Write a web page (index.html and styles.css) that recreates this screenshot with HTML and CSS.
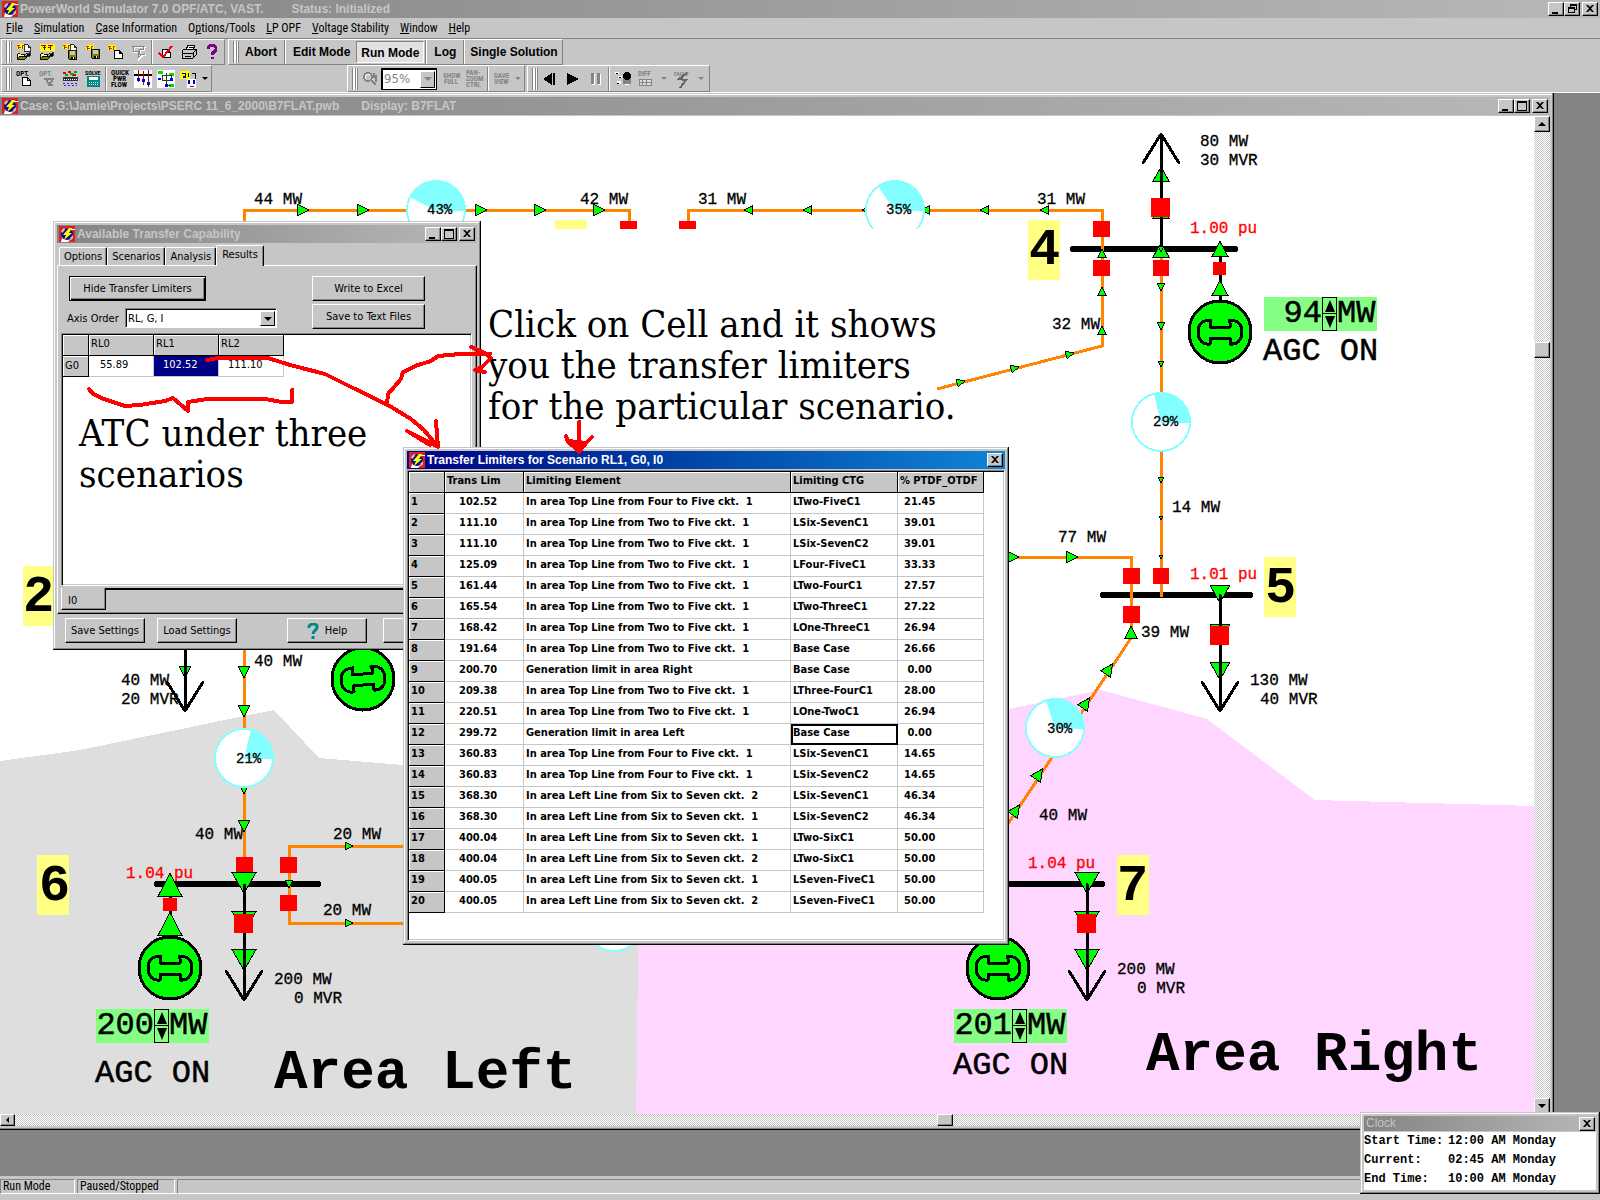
FILE: index.html
```html
<!DOCTYPE html>
<html lang="en">
<head>
<meta charset="utf-8">
<title>PowerWorld Simulator 7.0 OPF/ATC</title>
<link rel="stylesheet" href="styles.css">
</head>
<body>
<svg class="defs" aria-hidden="true">
  <defs>
    <symbol id="logo" viewBox="0 0 16 16">
      <rect width="16" height="16" fill="#fff"/>
      <path d="M0 0h16v3h-3l-3-1H6L3 4v8l-1 4H0zM13 4h3v12H9l4-4z" fill="#e02020"/>
      <circle cx="8" cy="8" r="6" fill="#101080"/>
      <path d="M2 5l3-3 1 2-3 3zM11 12l3-3v3l-2 2z" fill="#c6c6c6"/>
      <path d="M10 2L4 9h3l-2 5 8-7h-3l3-5z" fill="#ff0"/>
    </symbol>
    <symbol id="page" viewBox="0 0 9 9"><path d="M.5.5h5l3 3v5h-8zM5.500.5v3h3" fill="#fff" stroke="#000"/></symbol>
    <symbol id="floppy" viewBox="0 0 10 10"><path d="M.5.5h9v9h-8l-1-1z" fill="#808000" stroke="#000"/><path d="M2 1h6v4H2z" fill="#c6c6c6"/><path d="M3 7h5v3H3z" fill="#000"/><path d="M6 7h1v2H6z" fill="#fff"/></symbol>
    <symbol id="folder" viewBox="0 0 16 8"><path d="M.5 7.500v-5l1-1h2l1 1h4v2" fill="#ff8" stroke="#000"/><path d="M.5 7.500l2-3h8l-2 3z" fill="#808000" stroke="#000"/><path d="M9 2c2-2 3 0 4 1M14 0v4h-4z" fill="#000" stroke="#000" stroke-width=".7"/></symbol>
    <symbol id="case" viewBox="0 0 10 6"><path d="M0 0h9v5H0z" fill="#ff0"/><path d="M0 1h3M5 1h3M1 3h3M5 3h2M2 5v-3M6 5V2" stroke="#b02000"/></symbol>
    <path id="flow" d="M-.5-.5L.5 0L-.5.5Z" vector-effect="non-scaling-stroke"/>
    <g id="machine"><circle r="31" fill="#0f0" stroke="#000" stroke-width="3"/><path d="M-10-5H10V-9L9-12C17-12 22-8 22 0S17 13 10 12V6H-10V12C-17 13-22 8-22 0S-17-12-9-12L-10-9Z" fill="#0f0" stroke="#000" stroke-width="3" stroke-linejoin="round"/></g>
    <g id="load-head"><path d="M0-116V0M-18-29L0 0L18-29" fill="none" stroke="#000" stroke-width="3" stroke-linecap="round" stroke-linejoin="round"/></g>
  </defs>
</svg>
<div class="app">
  <header class="top">
    <div class="titlebar app-title">
      <svg class="logo"><use href="#logo"/></svg>
      <h1 class="caption">PowerWorld Simulator 7.0 OPF/ATC, VAST.</h1>
      <span class="caption status-caption">Status: Initialized</span>
      <div class="win-buttons">
        <button class="wb" aria-label="Minimize"><svg viewBox="0 0 12 10"><path d="M2 8h6v2H2z"/></svg></button>
        <button class="wb" aria-label="Restore"><svg viewBox="0 0 12 10"><path d="M4 0h7v6H9V5h1V2H5v1H4zM2 3h7v6H2zM3 5v3h5V5z" fill-rule="evenodd"/></svg></button>
        <button class="wb close" aria-label="Close"><svg viewBox="0 0 12 10"><path d="M2 1h2l2 2 2-2h2L7 4.500 10 8H8L6 6 4 8H2l3-3.500z"/></svg></button>
      </div>
    </div>
    <nav class="menu">
      <a href="#"><u>F</u>ile</a><a href="#"><u>S</u>imulation</a><a href="#"><u>C</u>ase Information</a><a href="#">O<u>p</u>tions/Tools</a><a href="#"><u>L</u>P OPF</a><a href="#"><u>V</u>oltage Stability</a><a href="#"><u>W</u>indow</a><a href="#"><u>H</u>elp</a>
    </nav>
    <div class="bars">
      <div class="bar-row">
        <div class="bar">
          <i class="grip"></i>
          <button class="tb" aria-label="Open case and display"><svg viewBox="0 0 16 16"><use href="#case" x="1" y="0" width="9" height="6"/><use href="#page" x="8" y="0" width="7" height="8"/><use href="#folder" x="1" y="8" width="15" height="8"/></svg></button>
          <button class="tb" aria-label="Open case"><svg viewBox="0 0 16 16"><path d="M1 0h15v7H1z" fill="#ff0"/><path d="M2 1h5M9 1h5M4 3h3M9 3h3M5 1v5M11 1v5" stroke="#900"/><use href="#folder" x="1" y="8" width="15" height="8"/></svg></button>
          <button class="tb" aria-label="Save case and display"><svg viewBox="0 0 16 16"><use href="#case" x="1" y="0" width="9" height="6"/><use href="#page" x="8" y="0" width="7" height="8"/><use href="#floppy" x="6" y="6" width="9" height="10"/></svg></button>
          <button class="tb" aria-label="Save case"><svg viewBox="0 0 16 16"><use href="#case" x="1" y="1" width="9" height="6"/><use href="#floppy" x="6" y="5" width="9" height="10"/></svg></button>
          <button class="tb" aria-label="New display"><svg viewBox="0 0 16 16"><use href="#case" x="0" y="1" width="9" height="6"/><use href="#page" x="5" y="6" width="10" height="9"/></svg></button>
          <button class="tb" aria-label="Edit display" disabled><svg viewBox="0 0 16 16"><path d="M1 2h13M2 2v5h5M7 7v7l3-3M12 2v3H8v5h6" fill="none" stroke="#fff" stroke-width="2" transform="translate(1 1)"/><path d="M1 2h13M2 2v5h5M7 7v7l3-3M12 2v3H8v5h6" fill="none" stroke="#848484"/></svg></button>
          <i class="sep"></i>
          <button class="tb" aria-label="Validate"><svg viewBox="0 0 16 16"><use href="#page" x="4" y="4" width="9" height="11"/><path d="M1 9l4 4L14 2" fill="none" stroke="#e00" stroke-width="2"/></svg></button>
          <button class="tb" aria-label="Print"><svg viewBox="0 0 16 16"><path d="M5 6l2-5h7l-2 5z" fill="#fff" stroke="#000"/><path d="M1 7l2-2h12v6l-3 3H1z" fill="#c6c6c6" stroke="#000"/><path d="M1 9h11l3-3M12 9v5M4 12h6M8 3h4" fill="none" stroke="#000"/></svg></button>
          <button class="tb" aria-label="Help"><svg viewBox="0 0 16 16"><path d="M4 5C4 0 13 0 12 5c0 3-4 3-4 6M8 13v2" fill="none" stroke="#800080" stroke-width="3"/></svg></button>
        </div>
        <div class="bar modes">
          <i class="grip"></i>
          <button class="mode">Abort</button><i class="sep"></i>
          <button class="mode">Edit Mode</button>
          <button class="mode pressed">Run Mode</button><i class="sep"></i>
          <button class="mode">Log</button><i class="sep"></i>
          <button class="mode">Single Solution</button>
        </div>
      </div>
      <div class="bar-row">
        <div class="bar">
          <i class="grip"></i>
          <button class="tb" aria-label="Options"><svg viewBox="0 0 16 16"><text x="0" y="5" class="t6" >OPT.</text><use href="#page" x="6" y="6" width="9" height="9"/></svg></button>
          <button class="tb" aria-label="Display options" disabled><svg viewBox="0 0 16 16"><text x="0" y="5" class="t6 off">OPT.</text><path d="M5 8h10M7 8l3 6 4-6M10 14h4" fill="none" stroke="#848484" stroke-width="2"/></svg></button>
          <button class="tb" aria-label="Area chart"><svg viewBox="0 0 16 16"><path d="M1 2h3M6 1h3M10 4h4" stroke="#e00" stroke-width="2"/><path d="M3 4h3M8 3h4M12 1h3" stroke="#0a0" stroke-width="2"/><path d="M1 6h15v4H1z" fill="#333"/><path d="M2 8h13" stroke="#fff" stroke-dasharray="1 1"/><path d="M1 12h15M2 14h13" stroke="#22f" stroke-dasharray="2 2"/></svg></button>
          <button class="tb" aria-label="Solve"><svg viewBox="0 0 16 16"><text x="0" y="4" class="t5">SOLVE</text><path d="M2 5h13v11H2z" fill="#088"/><path d="M4 6h9v3H4z" fill="#fff"/><path d="M4 11h10M4 13h10" stroke="#dff" stroke-dasharray="1 1"/></svg></button>
          <i class="sep"></i>
          <button class="tb" aria-label="Quick power flow"><svg viewBox="0 0 18 18"><text x="0" y="5" class="t6">QUICK</text><text x="2" y="11" class="t6">PWR</text><text x="0" y="17" class="t6">FLOW</text></svg></button>
          <button class="tb" aria-label="Bus list"><svg viewBox="0 0 18 18"><path d="M0 0h18v18H0z" fill="#fff"/><path d="M0 5h18" stroke="#000" stroke-width="2"/><path d="M4 0v12M9 1v14M14 0v17" stroke="#a00"/><path d="M3 8h3v3H3zM8 9h3v3H8zM13 12h3v3h-3z" fill="#00f"/></svg></button>
          <button class="tb" aria-label="One-line"><svg viewBox="0 0 18 18"><path d="M0 0h18v18H0z" fill="#fff"/><path d="M1 1h5v3H1zM12 3h5v3h-5zM12 14h5v3h-5z" fill="#0d0"/><path d="M5 5h9v5H5zM9 3v12h5" fill="none" stroke="#333"/><path d="M1 8h3v2H1zM13 8h3v3h-3zM8 14h3v3H8z" fill="#00f"/></svg></button>
          <button class="tb" aria-label="Contingency"><svg viewBox="0 0 18 18"><path d="M0 1h10v8H0z" fill="#ff0"/><path d="M2 3h3v3M8 3v4M12 3h3v6" fill="none" stroke="#000"/><path d="M7 9h9v9H7z" fill="#fff"/><path d="M3 6h3v2H3zM8 10h2v4H8zM13 10h2v4h-2z" fill="#00c"/><path d="M10 16h4" stroke="#a00"/></svg></button>
          <button class="drop" aria-label="More"></button>
        </div>
        <div class="bar zoom-bar">
          <i class="grip"></i>
          <button class="tb" aria-label="Zoom" disabled><svg viewBox="0 0 16 16"><circle cx="6" cy="6" r="4" fill="none" stroke="#fff" transform="translate(1 1)"/><circle cx="6" cy="6" r="4" fill="none" stroke="#848484" stroke-width="2"/><path d="M9 9l5 5M12 2v5M14 4v7" stroke="#848484" stroke-width="2"/></svg></button>
          <span class="combo pct"><select aria-label="Zoom level" disabled><option>95%</option></select><i class="arrow"></i></span>
          <button class="tb" aria-label="Show full" disabled><svg viewBox="0 0 18 18"><text x="0" y="8" class="t6 off">SHOW</text><text x="1" y="14" class="t6 off">FULL</text></svg></button>
          <button class="tb" aria-label="Pan and zoom" disabled><svg viewBox="0 0 18 18"><text x="0" y="5" class="t6 off">PAN-</text><text x="0" y="11" class="t6 off">ZOOM</text><text x="0" y="17" class="t6 off">CTRL</text></svg></button>
          <i class="sep"></i>
          <button class="tb" aria-label="Save view" disabled><svg viewBox="0 0 18 18"><text x="1" y="8" class="t6 off">SAVE</text><text x="1" y="14" class="t6 off">VIEW</text></svg></button>
          <button class="drop" aria-label="Views" disabled></button>
        </div>
        <div class="bar run-bar">
          <i class="grip"></i>
          <button class="tb" aria-label="Step back"><svg viewBox="0 0 16 16"><path d="M1 8l9-6v12zM11 2h2v12h-2z"/></svg></button>
          <button class="tb" aria-label="Play"><svg viewBox="0 0 16 16"><path d="M2 2l12 6-12 6z"/></svg></button>
          <button class="tb" aria-label="Pause" disabled><svg viewBox="0 0 16 16"><path d="M4 3h3v11H4zM10 3h3v11h-3z" fill="#fff"/><path d="M3 2h3v11H3zM9 2h3v11H9z" fill="#848484"/></svg></button>
          <i class="sep"></i>
          <button class="tb" aria-label="Contour"><svg viewBox="0 0 18 18"><path d="M1 2h4v2H1zM4 6h4v2H4zM3 11h4v3H3zM11 13h4v2h-4z" fill="#fff"/><path d="M2 3h2v1H2zM5 7h2v1H5zM3 13h2v1H3z"/><path d="M9 5h8v9H9z" fill="#848484"/><circle cx="13" cy="6" r="4"/></svg></button>
          <button class="tb" aria-label="Difference" disabled><svg viewBox="0 0 18 18"><text x="1" y="6" class="t6 off">DIFF</text><path d="M2 9h12v6H2zM5 9v6M9 9v6M2 12h12" fill="#ddd" stroke="#848484"/></svg></button>
          <button class="drop" aria-label="Difference options" disabled></button>
          <button class="tb" aria-label="Fault" disabled><svg viewBox="0 0 18 18"><text x="0" y="6" class="t5 off">FAULT</text><path d="M13 3L5 9l7 1-6 8" fill="none" stroke="#666" stroke-width="2"/></svg></button>
          <button class="drop" aria-label="Fault options" disabled></button>
        </div>
      </div>
    </div>
  </header>

  <main class="workspace">
    <section class="child" aria-label="Case display">
      <div class="titlebar">
        <svg class="logo"><use href="#logo"/></svg>
        <h2 class="caption">Case: G:\Jamie\Projects\PSERC 11_6_2000\B7FLAT.pwb</h2>
        <span class="caption display-caption">Display: B7FLAT</span>
        <div class="win-buttons">
          <button class="wb" aria-label="Minimize"><svg viewBox="0 0 12 10"><path d="M2 8h6v2H2z"/></svg></button>
          <button class="wb" aria-label="Maximize"><svg viewBox="0 0 12 10"><path d="M1 0h10v10H1zM2 2v7h8V2z" fill-rule="evenodd"/></svg></button>
          <button class="wb close" aria-label="Close"><svg viewBox="0 0 12 10"><path d="M2 1h2l2 2 2-2h2L7 4.500 10 8H8L6 6 4 8H2l3-3.500z"/></svg></button>
        </div>
      </div>
      <div class="child-body">
        <div class="canvas">
          <svg class="oneline">
            <g transform="translate(0 -116)">
              <path d="M0 761L80 750L244 716L274 710L319 758L403 765L640 780V1120H0Z" fill="#dedede"/>
              <path d="M640 800L1009 709L1101 690L1207 719L1315 800L1534 806V1120H636Z" fill="#ffd6ff"/>
              <g fill="#ffff84"><rect x="1028" y="220" width="32" height="60"/><rect x="1264" y="557" width="32" height="60"/><rect x="1117" y="855" width="32" height="60"/><rect x="37" y="855" width="32" height="60"/><rect x="23" y="566" width="32" height="60"/><rect x="555" y="220" width="32" height="9"/></g>
              <g fill="none" stroke="#000" stroke-width="6" stroke-linecap="round"><path d="M1073 249H1235M1103 595H1250M1000 884H1102M157 884H318"/></g>
              <g fill="none" stroke="#ff8400" stroke-width="3">
                <path d="M244 230V210H629V224M688 224V210H1102V346L937 389M1161 249V597M1000 557H1131V638L1000 836M244 640V872M410 846H289V923H410"/>
              </g>
              <g fill="none" stroke="#000" stroke-width="3"><path d="M1220 249V300M170 884V940"/></g>
              <g fill="#0f0" stroke="#000">
                <use href="#flow" transform="translate(303 210) scale(12)"/><use href="#flow" transform="translate(363 210) scale(12)"/><use href="#flow" transform="translate(481 210) scale(12)"/><use href="#flow" transform="translate(540 210) scale(12)"/><use href="#flow" transform="translate(599 210) scale(12)"/>
                <use href="#flow" transform="translate(748 210) rotate(180) scale(8)"/><use href="#flow" transform="translate(807 210) rotate(180) scale(8)"/><use href="#flow" transform="translate(866 210) rotate(180) scale(8)"/><use href="#flow" transform="translate(925 210) rotate(180) scale(8)"/><use href="#flow" transform="translate(984 210) rotate(180) scale(8)"/><use href="#flow" transform="translate(1044 210) rotate(180) scale(8)"/>
                <use href="#flow" transform="translate(1102 253) rotate(-90) scale(8)"/><use href="#flow" transform="translate(1102 291) rotate(-90) scale(8)"/><use href="#flow" transform="translate(1102 330) rotate(-90) scale(8)"/>
                <use href="#flow" transform="translate(961 382) rotate(-15) scale(8)"/><use href="#flow" transform="translate(1015 368) rotate(-15) scale(8)"/><use href="#flow" transform="translate(1070 354) rotate(-15) scale(8)"/>
                <use href="#flow" transform="translate(1161 287) rotate(90) scale(8)"/><use href="#flow" transform="translate(1161 326) rotate(90) scale(8)"/><use href="#flow" transform="translate(1161 364) rotate(90) scale(6)"/><use href="#flow" transform="translate(1161 480) rotate(90) scale(6)"/><use href="#flow" transform="translate(1161 518) rotate(90) scale(4)"/><use href="#flow" transform="translate(1161 557) rotate(90) scale(4)"/>
                <use href="#flow" transform="translate(1161 250) rotate(-90) scale(14 16)"/><use href="#flow" transform="translate(1161 174) rotate(-90) scale(14 16)"/><use href="#flow" transform="translate(1161 211) rotate(-90) scale(14 16)"/>
                <use href="#flow" transform="translate(1220 249) rotate(-90) scale(15 16)"/><use href="#flow" transform="translate(1220 288) rotate(-90) scale(15 16)"/>
                <use href="#flow" transform="translate(1013 557) scale(12)"/><use href="#flow" transform="translate(1072 557) scale(12)"/>
                <use href="#flow" transform="translate(1131 632) rotate(-90) scale(12)"/><use href="#flow" transform="translate(1109 669) rotate(-56) scale(12)"/><use href="#flow" transform="translate(1086 703) rotate(-56) scale(12)"/><use href="#flow" transform="translate(1039 774) rotate(-56) scale(12)"/><use href="#flow" transform="translate(1016 810) rotate(-56) scale(12)"/>
                <use href="#flow" transform="translate(1220 594) rotate(90) scale(18 20)"/><use href="#flow" transform="translate(1220 633) rotate(90) scale(18 20)"/><use href="#flow" transform="translate(1220 671) rotate(90) scale(18 20)"/>
                <use href="#flow" transform="translate(1087 883) rotate(90) scale(21 24)"/><use href="#flow" transform="translate(1087 922) rotate(90) scale(21 24)"/><use href="#flow" transform="translate(1087 960) rotate(90) scale(21 24)"/>
                <use href="#flow" transform="translate(185 672) rotate(90) scale(12)"/><use href="#flow" transform="translate(244 672) rotate(90) scale(12)"/><use href="#flow" transform="translate(244 711) rotate(90) scale(12)"/><use href="#flow" transform="translate(244 788) rotate(90) scale(12)"/><use href="#flow" transform="translate(244 826) rotate(90) scale(12)"/>
                <use href="#flow" transform="translate(244 922) rotate(90) scale(21 24)"/><use href="#flow" transform="translate(244 960) rotate(90) scale(21 24)"/>
                <use href="#flow" transform="translate(170 885) rotate(-90) scale(23 24)"/><use href="#flow" transform="translate(170 924) rotate(-90) scale(23 24)"/>
                <use href="#flow" transform="translate(289 884) rotate(90) scale(8)"/><use href="#flow" transform="translate(349 846) scale(8)"/><use href="#flow" transform="translate(349 923) scale(8)"/>
              </g>
              <use href="#load-head" transform="translate(1161 134) rotate(180)"/>
              <use href="#load-head" transform="translate(1220 711)"/>
              <use href="#load-head" transform="translate(1087 1000)"/>
              <use href="#load-head" transform="translate(185 711)"/>
              <use href="#load-head" transform="translate(244 1000)"/>
              <g fill="#f00">
                <rect x="620" y="221" width="17" height="8"/><rect x="679" y="221" width="17" height="8"/>
                <rect x="1093" y="221" width="17" height="16"/><rect x="1093" y="260" width="17" height="16"/><rect x="1153" y="260" width="16" height="16"/><rect x="1151" y="198" width="19" height="19"/><rect x="1213" y="262" width="13" height="13"/>
                <rect x="1123" y="568" width="17" height="16"/><rect x="1153" y="568" width="16" height="16"/><rect x="1123" y="606" width="17" height="17"/><rect x="1210" y="626" width="19" height="19"/>
                <rect x="1077" y="914" width="19" height="19"/><rect x="234" y="914" width="19" height="19"/>
                <rect x="236" y="857" width="17" height="16"/><rect x="280" y="857" width="17" height="16"/><rect x="280" y="895" width="17" height="16"/><rect x="163" y="898" width="14" height="13"/>
              </g>
              <g fill="#0f0" stroke="#000">
                <use href="#flow" transform="translate(244 883) rotate(90) scale(21 24)"/>
                <use href="#flow" transform="translate(1161 249) rotate(90) scale(6)"/>
              </g>
              <path d="M244 884V900" stroke="#000" stroke-width="3"/>
              <use href="#machine" transform="translate(1220 332)"/><use href="#machine" transform="translate(998 968)"/><use href="#machine" transform="translate(170 968)"/><use href="#machine" transform="translate(363 679) rotate(-5)"/>
              <g fill="#fff" stroke="#84ffff" stroke-width="2">
                <circle cx="436" cy="210" r="29"/><circle cx="895" cy="210" r="29"/><circle cx="1161" cy="422" r="29"/><circle cx="1055" cy="728" r="29"/><circle cx="244" cy="758" r="29"/><circle cx="614" cy="922" r="29"/>
              </g>
              <g fill="#84ffff">
                <path d="M436 211H465A29 29 0 0 0 410 197Z"/><path d="M895 211H924A29 29 0 0 0 878 186Z"/><path d="M1161 423H1190A29 29 0 0 0 1154 394Z"/><path d="M1055 729H1084A29 29 0 0 0 1046 700Z"/><path d="M244 759H273A29 29 0 0 0 251 730Z"/>
              </g>
              <rect x="481" y="229" width="455" height="218" fill="#fff"/>
              <g class="label">
                <text x="254" y="204">44 MW</text><text x="580" y="204">42 MW</text><text x="698" y="204">31 MW</text><text x="1037" y="204">31 MW</text>
                <text x="1200" y="146">80 MW</text><text x="1200" y="165">30 MVR</text><text x="1052" y="329">32 MW</text><text x="1172" y="512">14 MW</text><text x="1058" y="542">77 MW</text>
                <text x="1141" y="637">39 MW</text><text x="1250" y="685">130 MW</text><text x="1260" y="704">40 MVR</text><text x="1039" y="820">40 MW</text>
                <text x="1117" y="974">200 MW</text><text x="1137" y="993">0 MVR</text><text x="121" y="685">40 MW</text><text x="121" y="704">20 MVR</text><text x="254" y="666">40 MW</text><text x="195" y="839">40 MW</text>
                <text x="333" y="839">20 MW</text><text x="323" y="915">20 MW</text><text x="274" y="984">200 MW</text><text x="294" y="1003">0 MVR</text>
              </g>
              <g class="label pu"><text x="1190" y="233">1.00 pu</text><text x="1190" y="579">1.01 pu</text><text x="1028" y="868">1.04 pu</text><text x="126" y="878">1.04 pu</text></g>
              <g class="pct-label"><text x="427" y="214">43%</text><text x="886" y="214">35%</text><text x="1153" y="426">29%</text><text x="1047" y="733">30%</text><text x="236" y="763">21%</text></g>
              <g class="bus-no"><text x="1029" y="264">4</text><text x="1265" y="602">5</text><text x="1117" y="900">7</text><text x="39" y="900">6</text><text x="23" y="611">2</text></g>
              <g class="agc"><text x="1263" y="360">AGC ON</text><text x="953" y="1074">AGC ON</text><text x="95" y="1082">AGC ON</text></g>
              <g class="area"><text x="274" y="1088">Area Left</text><text x="1146" y="1070">Area Right</text></g>
            </g>
          </svg>
          <div class="gen gen-4"><span class="mw">94</span><span class="spin"><button aria-label="Raise"></button><button class="down" aria-label="Lower"></button></span><span class="unit">MW</span></div>
          <div class="gen gen-7"><span class="mw">201</span><span class="spin"><button aria-label="Raise"></button><button class="down" aria-label="Lower"></button></span><span class="unit">MW</span></div>
          <div class="gen gen-6"><span class="mw">200</span><span class="spin"><button aria-label="Raise"></button><button class="down" aria-label="Lower"></button></span><span class="unit">MW</span></div>
        </div>
        <div class="vscroll"><button class="sb up" aria-label="Scroll up"></button><i class="before"></i><i class="thumb"></i><i class="after"></i><button class="sb dn" aria-label="Scroll down"></button></div>
        <div class="hscroll"><button class="sb lf" aria-label="Scroll left"></button><i class="before"></i><i class="thumb"></i><i class="after"></i></div>
        <div class="corner"></div>
      </div>
    </section>

    <section class="win atc" aria-label="Available Transfer Capability">
      <div class="titlebar">
        <svg class="logo"><use href="#logo"/></svg>
        <h2 class="caption">Available Transfer Capability</h2>
        <div class="win-buttons">
          <button class="wb" aria-label="Minimize"><svg viewBox="0 0 12 10"><path d="M2 8h6v2H2z"/></svg></button>
          <button class="wb" aria-label="Maximize"><svg viewBox="0 0 12 10"><path d="M1 0h10v10H1zM2 2v7h8V2z" fill-rule="evenodd"/></svg></button>
          <button class="wb close" aria-label="Close"><svg viewBox="0 0 12 10"><path d="M2 1h2l2 2 2-2h2L7 4.500 10 8H8L6 6 4 8H2l3-3.500z"/></svg></button>
        </div>
      </div>
      <div class="tabs" role="tablist">
        <button role="tab">Options</button><button role="tab">Scenarios</button><button role="tab">Analysis</button><button role="tab" class="on" aria-selected="true">Results</button>
      </div>
      <div class="panel">
        <div class="controls">
          <div class="left">
            <button class="btn default">Hide Transfer Limiters</button>
            <div class="axis"><label for="axis">Axis Order</label><span class="combo"><select id="axis"><option>RL, G, I</option></select><i class="arrow"></i></span></div>
          </div>
          <div class="right"><button class="btn">Write to Excel</button><button class="btn">Save to Text Files</button></div>
        </div>
        <div class="grid-box">
          <table class="grid results">
            <thead><tr><th></th><th>RL0</th><th>RL1</th><th>RL2</th></tr></thead>
            <tbody><tr><th>G0</th><td>55.89</td><td class="sel">102.52</td><td>111.10</td></tr></tbody>
          </table>
        </div>
        <div class="sheet-tabs"><button>I0</button><i></i></div>
      </div>
      <div class="actions">
        <button class="btn">Save Settings</button><button class="btn">Load Settings</button>
        <button class="btn help"><svg viewBox="0 0 12 16"><path d="M2 5C1 0 11 0 10 4c0 4-4 3-4 7M6 13v3" fill="none" stroke="#088" stroke-width="3"/></svg>Help</button>
        <button class="btn" aria-label="Close"></button>
      </div>
    </section>

    <section class="win limiters" aria-label="Transfer Limiters">
      <div class="titlebar active">
        <svg class="logo"><use href="#logo"/></svg>
        <h2 class="caption">Transfer Limiters for Scenario RL1, G0, I0</h2>
        <div class="win-buttons"><button class="wb close" aria-label="Close"><svg viewBox="0 0 12 10"><path d="M2 1h2l2 2 2-2h2L7 4.500 10 8H8L6 6 4 8H2l3-3.500z"/></svg></button></div>
      </div>
      <div class="grid-box">
        <table class="grid limits">
          <thead><tr><th></th><th>Trans Lim</th><th>Limiting Element</th><th>Limiting CTG</th><th>% PTDF_OTDF</th></tr></thead>
          <tbody>
            <tr><th>1</th><td>102.52</td><td>In area Top Line from Four to Five ckt.&nbsp; 1</td><td>LTwo-FiveC1</td><td>21.45</td></tr>
            <tr><th>2</th><td>111.10</td><td>In area Top Line from Two to Five ckt.&nbsp; 1</td><td>LSix-SevenC1</td><td>39.01</td></tr>
            <tr><th>3</th><td>111.10</td><td>In area Top Line from Two to Five ckt.&nbsp; 1</td><td>LSix-SevenC2</td><td>39.01</td></tr>
            <tr><th>4</th><td>125.09</td><td>In area Top Line from Two to Five ckt.&nbsp; 1</td><td>LFour-FiveC1</td><td>33.33</td></tr>
            <tr><th>5</th><td>161.44</td><td>In area Top Line from Two to Five ckt.&nbsp; 1</td><td>LTwo-FourC1</td><td>27.57</td></tr>
            <tr><th>6</th><td>165.54</td><td>In area Top Line from Two to Five ckt.&nbsp; 1</td><td>LTwo-ThreeC1</td><td>27.22</td></tr>
            <tr><th>7</th><td>168.42</td><td>In area Top Line from Two to Five ckt.&nbsp; 1</td><td>LOne-ThreeC1</td><td>26.94</td></tr>
            <tr><th>8</th><td>191.64</td><td>In area Top Line from Two to Five ckt.&nbsp; 1</td><td>Base Case</td><td>26.66</td></tr>
            <tr><th>9</th><td>200.70</td><td>Generation limit in area Right</td><td>Base Case</td><td>&nbsp;0.00</td></tr>
            <tr><th>10</th><td>209.38</td><td>In area Top Line from Two to Five ckt.&nbsp; 1</td><td>LThree-FourC1</td><td>28.00</td></tr>
            <tr><th>11</th><td>220.51</td><td>In area Top Line from Two to Five ckt.&nbsp; 1</td><td>LOne-TwoC1</td><td>26.94</td></tr>
            <tr><th>12</th><td>299.72</td><td>Generation limit in area Left</td><td class="focus">Base Case</td><td>&nbsp;0.00</td></tr>
            <tr><th>13</th><td>360.83</td><td>In area Top Line from Four to Five ckt.&nbsp; 1</td><td>LSix-SevenC1</td><td>14.65</td></tr>
            <tr><th>14</th><td>360.83</td><td>In area Top Line from Four to Five ckt.&nbsp; 1</td><td>LSix-SevenC2</td><td>14.65</td></tr>
            <tr><th>15</th><td>368.30</td><td>In area Left Line from Six to Seven ckt.&nbsp; 2</td><td>LSix-SevenC1</td><td>46.34</td></tr>
            <tr><th>16</th><td>368.30</td><td>In area Left Line from Six to Seven ckt.&nbsp; 1</td><td>LSix-SevenC2</td><td>46.34</td></tr>
            <tr><th>17</th><td>400.04</td><td>In area Left Line from Six to Seven ckt.&nbsp; 1</td><td>LTwo-SixC1</td><td>50.00</td></tr>
            <tr><th>18</th><td>400.04</td><td>In area Left Line from Six to Seven ckt.&nbsp; 2</td><td>LTwo-SixC1</td><td>50.00</td></tr>
            <tr><th>19</th><td>400.05</td><td>In area Left Line from Six to Seven ckt.&nbsp; 1</td><td>LSeven-FiveC1</td><td>50.00</td></tr>
            <tr><th>20</th><td>400.05</td><td>In area Left Line from Six to Seven ckt.&nbsp; 2</td><td>LSeven-FiveC1</td><td>50.00</td></tr>
          </tbody>
        </table>
      </div>
    </section>

    <svg class="notes">
      <g transform="translate(0 -93)">
        <text x="488" y="337">Click on Cell and it shows</text><text x="488" y="378">you the transfer limiters</text><text x="488" y="419">for the particular scenario.</text>
        <text x="79" y="446">ATC under three</text><text x="79" y="487">scenarios</text>
        <g class="ink">
          <path d="M89 389L93 394L104 399L125 406L140 405L165 401L173 398L188 411V402L207 399H265L282 402H292V390"/>
          <path d="M207 360L218 358H268L290 365L325 374L355 389L388 405L411 419L424 430L438 447M407 431L438 447L436 421M412 434L430 445"/>
          <path d="M387 405L388 394L401 379L403 372L418 365L431 361L438 356L460 354L490 354M471 347L483 352L491 358L482 367L475 370L485 372"/>
          <path d="M579 422V451M566 436L568 442L579 451L587 442L592 437"/>
          <path d="M569 441L579 452L586 443Z" class="fill"/>
        </g>
      </g>
    </svg>
  </main>

  <footer class="status"><span class="cell mode-cell">Run Mode</span><span class="cell state-cell">Paused/Stopped</span><span class="cell rest"></span></footer>

  <section class="win clock" aria-label="Clock">
    <div class="titlebar">
      <h2 class="caption">Clock</h2>
      <div class="win-buttons"><button class="wb close" aria-label="Close"><svg viewBox="0 0 12 10"><path d="M2 1h2l2 2 2-2h2L7 4.500 10 8H8L6 6 4 8H2l3-3.500z"/></svg></button></div>
    </div>
    <dl>
      <dt>Start Time:</dt><dd>12:00 AM Monday</dd>
      <dt>Current:</dt><dd>02:45 AM Monday</dd>
      <dt>End Time:</dt><dd>10:00 AM Monday</dd>
    </dl>
  </section>
</div>
</body>
</html>
```
FILE: styles.css
```css
*, *::before { box-sizing: border-box; }
html, body { height: 100%; margin: 0; }
body { background: #c6c6c6; color: #000; font: 11px/13px "DejaVu Sans Condensed", "DejaVu Sans", sans-serif; overflow: hidden; }
button, select { font: inherit; color: inherit; margin: 0; padding: 0; border: 0; border-radius: 0; background: none; appearance: none; }
h1, h2, dl, dd { margin: 0; font: inherit; }
.defs { position: absolute; width: 0; height: 0; }

.app { position: relative; display: flex; flex-direction: column; height: 100vh; }
.top { flex: none; border-bottom: 1px solid #fff; }

/* title bars */
.titlebar { display: flex; flex: none; align-items: center; height: 18px; padding: 0 2px; gap: 2px; background: linear-gradient(90deg, #848484, #b8b8b8); color: #c6c6c6; font: bold 12px/18px "Liberation Sans", Arial, sans-serif; white-space: nowrap; }
.titlebar.active { background: linear-gradient(90deg, #000084, #0042a5 45%, #1084d6); color: #fff; }
.logo { width: 16px; height: 16px; flex: none; }
.caption { white-space: pre; }
.status-caption { margin-left: 26px; }
.display-caption { margin-left: 20px; }
.win-buttons { display: flex; margin-left: auto; color: #000; }
.wb { width: 16px; height: 14px; padding: 1px; background: #c6c6c6; border: 1px solid; border-color: #fff #000 #000 #fff; box-shadow: inset -1px -1px #848484; }
.wb svg { display: block; width: 12px; height: 10px; }
.wb.close { margin-left: 2px; }
.wb.close:first-child { margin-left: 0; }

/* menu and tool bars */
.menu { display: flex; gap: 11px; height: 21px; padding: 2px 6px; border-bottom: 1px solid #848484; font: 12px/16px "Roboto Condensed", "Liberation Sans Narrow", sans-serif; }
.menu a { color: #000; text-decoration: none; }
.bars { display: flex; flex-direction: column; }
.bar-row { display: flex; height: 26px; gap: 2px; padding-left: 1px; }
.bar-row:last-child { height: 27px; }
.bar { display: flex; align-items: center; padding: 0 1px 0 4px; border: 1px solid; border-color: #fff #848484 #848484 #fff; }
.grip { width: 6px; height: 22px; border: solid; border-width: 0 1px; border-color: #848484; background: linear-gradient(90deg, #fff 2px, #848484 2px 3px, #fff 3px); }
.sep { width: 2px; height: 24px; margin: 0 1px; background: #848484; border-right: 1px solid #fff; }
.tb { display: grid; place-items: center; width: 23px; height: 23px; }
.tb svg { width: 16px; height: 16px; overflow: visible; }
.tb svg[viewBox="0 0 18 18"] { width: 18px; height: 18px; }
.tb svg :not(text) { shape-rendering: crispEdges; }
.t6 { font: bold 7px "Roboto Condensed", "Liberation Sans Narrow", sans-serif; }
.t5 { font: bold 6px "Roboto Condensed", "Liberation Sans Narrow", sans-serif; }
.off { fill: #848484; }
.drop { display: grid; place-items: center; width: 10px; height: 23px; }
.drop::before { content: ""; border: solid transparent; border-width: 3px 3px 0; border-top-color: #000; }
.drop:disabled::before { border-top-color: #848484; }
.bar.modes { margin-left: 1px; font: bold 12px/14px "Liberation Sans", Arial, sans-serif; }
.mode { height: 22px; padding: 0 6px; }
.modes .mode:last-child { padding: 0 3px 0 4px; }
.mode.pressed { padding: 2px 4px 0; border: 1px solid; border-color: #848484 #fff #fff #848484; background: #e2e2e2; }
.zoom-bar { margin-left: 133px; }
.run-bar .drop { margin: 0 2px; }
.combo { position: relative; display: flex; background: #fff; border: 1px solid; border-color: #848484 #fff #fff #848484; box-shadow: inset 1px 1px #000; }
.combo select { width: 100%; padding: 0 2px; }
.combo .arrow { position: absolute; right: 1px; top: 2px; bottom: 1px; width: 15px; display: grid; place-items: center; background: #c6c6c6; border: 1px solid; border-color: #fff #000 #000 #fff; pointer-events: none; }
.combo .arrow::before { content: ""; border: solid transparent; border-width: 4px 4px 0; border-top-color: #000; }
.combo.pct { width: 56px; height: 22px; border: 1px solid #000; margin-right: 3px; }
.combo.pct select { color: #848484; opacity: 1; font-size: 13px; }
.combo.pct .arrow::before { border-top-color: #848484; }

/* work area with the one-line child window */
.workspace { position: relative; flex: 1; min-height: 0; background: #848484; overflow: hidden; }
.child { position: absolute; left: 0; top: 0; right: 46px; bottom: 46px; display: flex; flex-direction: column; padding: 4px 4px 4px 0; background: #c6c6c6; box-shadow: inset -1px -1px #000, inset -2px -2px #848484, inset 0 1px #c6c6c6, inset 0 2px #fff; }
.child > .titlebar { margin-bottom: 1px; }
.child-body { flex: 1; min-height: 0; display: grid; grid-template: 1fr 12px / 1fr 16px; }
.canvas { position: relative; background: #fff; overflow: hidden; }
.oneline { position: absolute; width: 100%; height: 100%; shape-rendering: crispEdges; }
.vscroll, .hscroll { display: flex; background: repeating-conic-gradient(#fff 0 25%, #c6c6c6 0 50%) 0 0 / 2px 2px; }
.vscroll { flex-direction: column; }
.sb, .thumb { flex: none; width: 16px; height: 16px; display: grid; place-items: center; background: #c6c6c6; border: 1px solid; border-color: #fff #000 #000 #fff; box-shadow: inset -1px -1px #848484; }
.hscroll .sb, .hscroll .thumb { height: 12px; }
.hscroll .sb { width: 15px; }
.sb::before { content: ""; border: solid transparent; }
.sb.up::before { border-width: 0 4px 4px; border-bottom-color: #000; }
.sb.dn::before { border-width: 4px 4px 0; border-top-color: #000; }
.sb.lf::before { border-width: 3px 3px 3px 0; border-right-color: #000; }
.vscroll .before { flex: 210; }
.vscroll .after { flex: 741; }
.hscroll .before { flex: 922; }
.hscroll .after { flex: 581; }

.label { font: 16px "Liberation Mono", "Courier New", monospace; stroke: #000; stroke-width: .3px; }
.pu { fill: #f00; stroke: #f00; }
.pct-label { font: 14px "Liberation Mono", "Courier New", monospace; stroke: #000; stroke-width: .3px; }
.bus-no { font: bold 52px "Liberation Mono", "Courier New", monospace; }
.agc { font: 32px "Liberation Mono", "Courier New", monospace; stroke: #000; stroke-width: .5px; }
.area { font: bold 56px "Liberation Mono", "Courier New", monospace; }
.gen { position: absolute; display: flex; justify-content: flex-end; width: 113px; height: 34px; background: #84ff84; font: 32px/34px "Liberation Mono", "Courier New", monospace; -webkit-text-stroke: .5px #000; white-space: nowrap; }
.gen-4 { left: 1264px; top: 181px; }
.gen-7 { left: 954px; top: 893px; }
.gen-6 { left: 96px; top: 893px; }
.unit { width: 40px; }
.spin { display: grid; grid-template-rows: 1fr 1fr; width: 15px; border: 1px solid #000; }
.spin button { display: grid; place-items: center; border-bottom: 1px solid #000; }
.spin button::before { content: ""; border: solid transparent; border-width: 0 5px 12px; border-bottom-color: #000; }
.spin .down { border: 0; }
.spin .down::before { border-width: 12px 5px 0; border-top-color: #000; }

/* floating windows */
.win { position: absolute; display: flex; flex-direction: column; padding: 4px; background: #c6c6c6; box-shadow: inset -1px -1px #000, inset 1px 1px #c6c6c6, inset -2px -2px #848484, inset 2px 2px #fff; }
.win .caption { overflow: hidden; }
.atc { left: 53px; top: 128px; width: 428px; height: 429px; }
.limiters { left: 403px; top: 354px; width: 606px; height: 498px; }
.tabs { display: flex; align-items: flex-end; height: 21px; margin-top: 1px; padding-left: 2px; }
.tabs button { height: 18px; padding: 0 4px; border: 1px solid; border-color: #fff #000 transparent #fff; border-bottom: 0; border-radius: 2px 2px 0 0; box-shadow: inset -1px 0 #848484; }
.tabs .on { height: 21px; padding: 0 5px 4px; margin-bottom: -1px; background: #c6c6c6; z-index: 1; }
.panel { flex: 1; display: flex; flex-direction: column; padding: 10px 4px 3px 3px; border: 1px solid; border-color: #fff #000 #000 #fff; box-shadow: inset -1px -1px #848484; }
.controls { display: flex; justify-content: space-between; padding: 0 47px 4px 4px; }
.left, .right { display: flex; flex-direction: column; gap: 3px; }
.left { gap: 7px; }
.btn { height: 25px; border: 1px solid; border-color: #fff #000 #000 #fff; box-shadow: inset -1px -1px #848484; text-align: center; }
.btn.default { align-self: flex-start; margin-left: 4px; width: 137px; border: 1px solid #000; box-shadow: inset 1px 1px #fff, inset -1px -1px #000, inset -2px -2px #848484; }
.right .btn { width: 113px; }
.axis { display: flex; align-items: center; gap: 6px; padding-left: 2px; }
.axis label { width: 52px; }
.axis .combo { width: 152px; height: 20px; }
.grid-box { flex: 1; background: #fff; border: 1px solid; border-color: #848484 #fff #fff #848484; box-shadow: inset 1px 1px #000, inset -1px -1px #c6c6c6; padding: 1px; overflow: hidden; }
.grid { border-collapse: separate; border-spacing: 0; table-layout: fixed; }
.grid th, .grid td { height: 21px; padding: 0 2px 3px; line-height: 13px; text-align: left; white-space: pre; vertical-align: middle; overflow: visible; font-weight: inherit; }
.grid td { border: solid #c6c6c6; border-width: 0 1px 1px 0; }
.grid th { background: #c6c6c6; border: solid #000; border-width: 0 1px 1px 0; box-shadow: inset 1px 1px #fff; }
.results { width: 221px; }
.results th:first-child { width: 26px; }
.results tbody th { padding-bottom: 1px; }
.results td { padding-left: 11px; }
.results .sel { background: #000084; color: #fff; padding-left: 9px; }
.results td:last-child { padding-left: 9px; }
.sheet-tabs { display: flex; height: 24px; padding-top: 2px; }
.sheet-tabs button { width: 45px; height: 22px; padding: 3px 6px 0; text-align: left; border: solid; border-width: 0 1px 1px; border-color: #fff #000 #000 #fff; box-shadow: inset -1px -1px #848484; }
.sheet-tabs i { flex: 1; border-top: 2px solid #000; }
.actions { display: grid; grid-template-columns: 80px 80px 80px 80px; column-gap: 12px; padding: 4px 3px 3px 8px; }
.actions .btn:nth-child(3) { margin: 0 -38px 0 38px; }
.actions .btn:nth-child(4) { margin: 0 -42px 0 42px; }
.help { display: flex; align-items: center; justify-content: center; gap: 6px; }
.help svg { width: 12px; height: 16px; }

.limiters .grid-box { margin-top: 1px; }
.limits { width: 575px; font-weight: bold; }
.limits th:first-child { width: 36px; }
.limits th:nth-child(2) { width: 79px; }
.limits th:nth-child(3) { width: 267px; }
.limits th:nth-child(4) { width: 107px; }
.limits td:nth-child(2) { padding-left: 14px; }
.limits td:nth-child(5) { padding-left: 6px; }
.limits .focus { outline: 2px solid #000; outline-offset: -2px; }

.notes { position: absolute; inset: 0; width: 100%; height: 100%; pointer-events: none; font: 38px "DejaVu Serif Condensed", "DejaVu Serif", serif; }
.ink { fill: none; stroke: #f00; stroke-width: 4; stroke-linejoin: round; stroke-linecap: round; shape-rendering: crispEdges; }
.ink .fill { fill: #f00; }

/* status line and clock */
.status { flex: none; display: flex; gap: 2px; height: 24px; padding: 2px 0 6px; border-top: 1px solid #c6c6c6; box-shadow: inset 0 -6px #c6c6c6, inset 0 -7px #fff; font: 12px/14px "Roboto Condensed", "Liberation Sans Narrow", sans-serif; }
.cell { height: 15px; padding: 0 2px; border: 1px solid; border-color: #848484 #fff #fff #848484; line-height: 13px; }
.mode-cell { width: 75px; }
.state-cell { width: 98px; }
.rest { flex: 1; }
.clock { right: 0; bottom: 6px; width: 240px; }
.clock .titlebar { height: 15px; line-height: 15px; font-weight: 400; padding: 0 1px 0 2px; }
.clock dl { display: grid; grid-template-columns: 84px 1fr; margin-top: 1px; padding-bottom: 1px; background: #fff; font: bold 12px/19px "Liberation Mono", "Courier New", monospace; white-space: nowrap; }
```
